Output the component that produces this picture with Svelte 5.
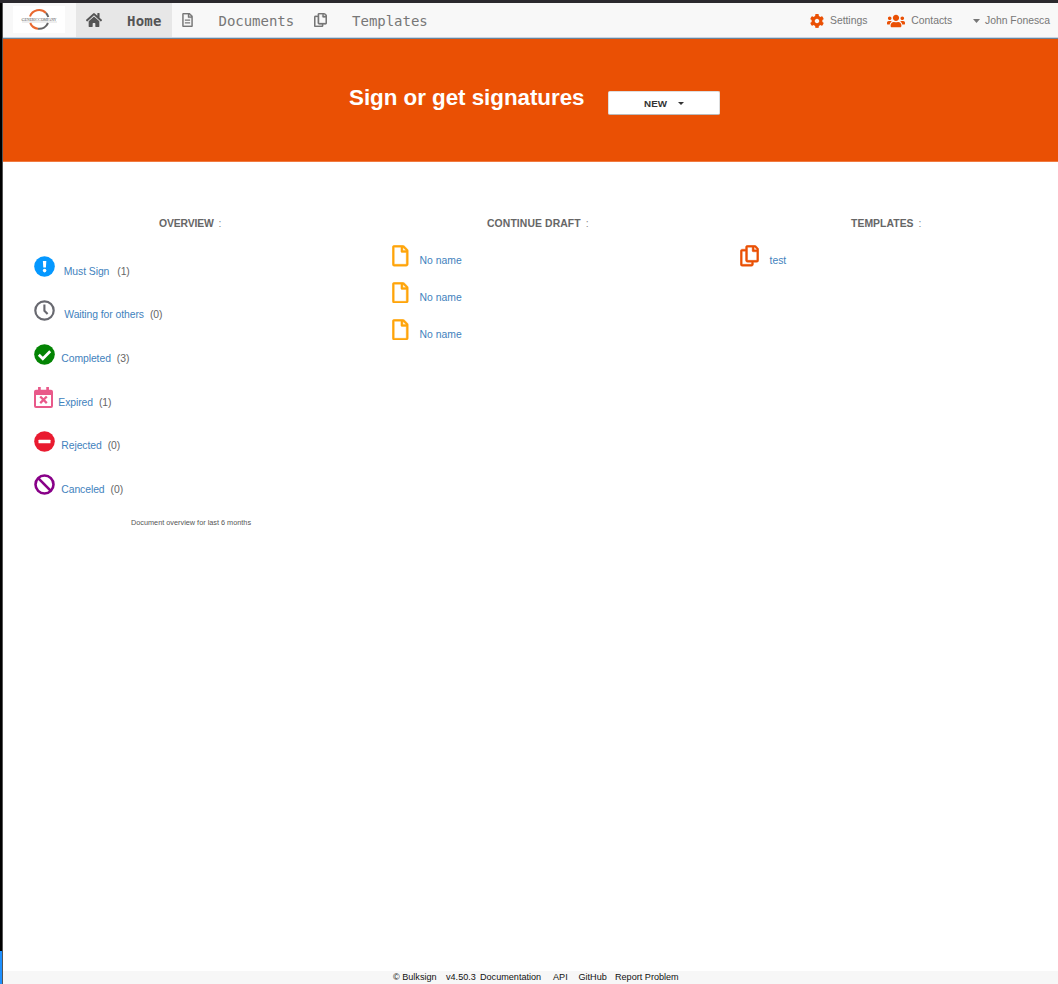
<script>
  const overview = [
    { name: 'Must Sign', count: 1, icon: 'must', gap: 8.5, after: 8 },
    { name: 'Waiting for others', count: 0, icon: 'wait', gap: 9, after: 6 },
    { name: 'Completed', count: 3, icon: 'done', gap: 6, after: 6 },
    { name: 'Expired', count: 1, icon: 'expired', gap: 5, after: 6 },
    { name: 'Rejected', count: 0, icon: 'rejected', gap: 6, after: 6 },
    { name: 'Canceled', count: 0, icon: 'canceled', gap: 6, after: 6 }
  ];
  const drafts = ['No name', 'No name', 'No name'];
  const copyPath = 'M433.941 65.941l-51.882-51.882A48 48 0 0 0 348.118 0H176c-26.51 0-48 21.49-48 48v48H48c-26.51 0-48 21.49-48 48v320c0 26.51 21.49 48 48 48h224c26.51 0 48-21.49 48-48v-48h80c26.51 0 48-21.49 48-48V99.882a48 48 0 0 0-14.059-33.941zM266 464H54a6 6 0 0 1-6-6V150a6 6 0 0 1 6-6h74v224c0 26.51 21.49 48 48 48h96v42a6 6 0 0 1-6 6zm128-96H182a6 6 0 0 1-6-6V54a6 6 0 0 1 6-6h106v88c0 13.255 10.745 24 24 24h88v202a6 6 0 0 1-6 6zm6-256h-64V48h9.632c1.591 0 3.117.632 4.243 1.757l48.368 48.368a6 6 0 0 1 1.757 4.243V112z';
  const filePath = 'M369.9 97.9L286 14C277 5 264.8 0 252.1 0H48C21.5 0 0 21.5 0 48v416c0 26.5 21.5 48 48 48h288c26.5 0 48-21.5 48-48V131.9c0-12.7-5.1-25-14.1-34zM332.1 128H256V51.9l76.1 76.1zM48 464V48h160v104c0 13.3 10.7 24 24 24h104v288H48z';
</script>

<div class="frame">
  <div class="edge"><i></i></div>
  <div class="page">
    <nav>
      <a class="logo" href="#home" aria-label="Generic Company">
        <svg width="52" height="27" viewBox="0 0 52 27">
          <rect width="52" height="27" fill="#fff" />
          <g fill="none" stroke-width="2">
            <path d="M17 10.5A9.6 9.6 0 0 1 33 7" stroke="#e9682f" />
            <path d="M33 7A9.6 9.6 0 0 1 35.3 11" stroke="#666" />
            <path d="M17.2 17A9.6 9.6 0 0 0 25 22.7" stroke="#e9682f" />
            <path d="M25 22.7A9.6 9.6 0 0 0 35 17" stroke="#666" />
          </g>
          <text x="8.5" y="14.8" textLength="35" lengthAdjust="spacingAndGlyphs" font-family="Liberation Serif, serif" font-size="4.2" fill="#444"><tspan>G</tspan><tspan font-size="3.400">ENERIC </tspan><tspan>C</tspan><tspan font-size="3.400">OMPANY</tspan></text>
          <path d="M9 16h35" stroke="#bbb" stroke-width=".5" />
        </svg>
      </a>
      <a class="tab active" href="#home">
        <svg width="16" height="14" viewBox="0 30 576 452" preserveAspectRatio="none"><path fill="#555" d="M280.37 148.26L96 300.11V464a16 16 0 0 0 16 16l112.06-.29a16 16 0 0 0 15.92-16V368a16 16 0 0 1 16-16h64a16 16 0 0 1 16 16v95.64a16 16 0 0 0 16 16.05L464 480a16 16 0 0 0 16-16V300L295.67 148.26a12.19 12.19 0 0 0-15.3 0zM571.6 251.47L488 182.56V44.05a12 12 0 0 0-12-12h-56a12 12 0 0 0-12 12v72.61L318.47 43a48 48 0 0 0-61 0L4.34 251.47a12 12 0 0 0-1.6 16.9l25.5 31A12 12 0 0 0 45.15 301l235.22-193.74a12.19 12.19 0 0 1 15.3 0L530.9 301a12 12 0 0 0 16.9-1.6l25.5-31a12 12 0 0 0-1.7-16.93z" /></svg>
        <span>Home</span>
      </a>
      <a class="tab docs" href="#documents">
        <svg width="11" height="14" viewBox="0 0 384 512"><path fill="#777" stroke="#777" stroke-width="10" d={filePath} /><path d="M96 264h192M96 360h192" stroke="#777" stroke-width="46" /></svg>
        <span>Documents</span>
      </a>
      <a class="tab temps" href="#templates">
        <svg width="13" height="14" viewBox="0 0 448 512" preserveAspectRatio="none"><path fill="#777" stroke="#777" stroke-width="10" d={copyPath} /></svg>
        <span>Templates</span>
      </a>
      <div class="tools">
        <a href="#settings">
          <svg width="14" height="14" viewBox="8 8 496 496"><path fill="#ea5004" d="M487.4 315.7l-42.6-24.6c4.3-23.2 4.3-47 0-70.2l42.6-24.6c4.9-2.8 7.1-8.6 5.5-14-11.1-35.6-30-67.8-54.7-94.6-3.8-4.1-10-5.1-14.8-2.3L380.8 110c-17.9-15.4-38.5-27.3-60.8-35.1V25.8c0-5.6-3.9-10.5-9.4-11.7-36.7-8.2-74.3-7.8-109.2 0-5.5 1.2-9.4 6.1-9.4 11.7V75c-22.2 7.9-42.8 19.8-60.8 35.1L88.7 85.5c-4.9-2.8-11-1.9-14.8 2.3-24.7 26.7-43.6 58.9-54.7 94.6-1.7 5.4.6 11.2 5.5 14L67.3 221c-4.3 23.2-4.3 47 0 70.2l-42.6 24.6c-4.9 2.8-7.1 8.6-5.5 14 11.1 35.6 30 67.8 54.7 94.6 3.8 4.1 10 5.1 14.8 2.3l42.6-24.6c17.9 15.4 38.5 27.3 60.8 35.1v49.2c0 5.6 3.9 10.5 9.4 11.7 36.7 8.2 74.3 7.8 109.2 0 5.5-1.2 9.4-6.1 9.4-11.7v-49.2c22.2-7.9 42.8-19.8 60.8-35.1l42.6 24.6c4.9 2.8 11 1.9 14.8-2.3 24.7-26.7 43.6-58.9 54.7-94.6 1.5-5.5-.7-11.3-5.6-14.1zM256 336c-44.1 0-80-35.9-80-80s35.9-80 80-80 80 35.9 80 80-35.9 80-80 80z" /></svg>
          <span>Settings</span>
        </a>
        <a class="contacts" href="#contacts">
          <svg width="18" height="14" viewBox="0 7 640 498"><path fill="#ea5004" d="M96 224c35.3 0 64-28.7 64-64s-28.7-64-64-64-64 28.7-64 64 28.7 64 64 64zm448 0c35.3 0 64-28.7 64-64s-28.7-64-64-64-64 28.7-64 64 28.7 64 64 64zm32 32h-64c-17.6 0-33.5 7.1-45.1 18.6 40.3 22.1 68.9 62 75.1 109.4h66c17.7 0 32-14.3 32-32v-32c0-35.3-28.7-64-64-64zm-256 0c61.9 0 112-50.1 112-112S381.9 32 320 32 208 82.1 208 144s50.1 112 112 112zm76.8 32h-8.3c-20.8 10-43.9 16-68.5 16s-47.6-6-68.5-16h-8.3C179.6 288 128 339.6 128 403.2V432c0 26.5 21.5 48 48 48h288c26.5 0 48-21.5 48-48v-28.8c0-63.6-51.6-115.2-115.2-115.2zm-223.7-13.4C161.5 263.1 145.6 256 128 256H64c-35.3 0-64 28.7-64 64v32c0 17.7 14.3 32 32 32h65.9c6.3-47.4 34.9-87.3 75.2-109.4z" /></svg>
          <span>Contacts</span>
        </a>
        <a class="user" href="#account">
          <svg width="7" height="4" viewBox="0 0 7 4"><path d="M0 0h7L3.5 4z" fill="#777" /></svg>
          <span>John Fonesca</span>
        </a>
      </div>
    </nav>

    <header>
      <h1>Sign or get signatures</h1>
      <button><span>NEW</span><svg width="6" height="3" viewBox="0 0 6 3"><path d="M0 0h6L3 3z" fill="#333" /></svg></button>
    </header>

    <main>
      <section class="overview">
        <h2>OVERVIEW <span>:</span></h2>
        <div class="statuses">
          {#each overview as item}
            <div class="status">
              <svg width={item.icon === 'expired' ? 19 : 21} height="21" viewBox={item.icon === 'expired' ? '0 0 19 21' : '0 0 21 21'}>
                {#if item.icon === 'must'}
                  <circle cx="10.5" cy="10.5" r="10.3" fill="#0598ff" />
                  <path d="M8.9 5h3.400l-.4 6.5H9.3z" fill="#fff" /><circle cx="10.6" cy="14.6" r="1.8" fill="#fff" />
                {:else if item.icon === 'wait'}
                  <circle cx="10.5" cy="10.5" r="9.2" fill="none" stroke="#686970" stroke-width="2.2" />
                  <path d="M10.4 4.5v6.2l3.2 3.200" fill="none" stroke="#686970" stroke-width="2.1" />
                {:else if item.icon === 'done'}
                  <circle cx="10.5" cy="10.5" r="10.3" fill="#038403" />
                  <path d="M4.8 10.8l4 4 7.4-7.5" fill="none" stroke="#fff" stroke-width="2.7" />
                {:else if item.icon === 'expired'}
                  <path d="M2 2.7h15a2 2 0 0 1 2 2V19a2 2 0 0 1-2 2H2a2 2 0 0 1-2-2V4.7a2 2 0 0 1 2-2zM2 8v11h15V8z" fill="#e9598a" fill-rule="evenodd" />
                  <path d="M5.4 0v4M13.6 0v4" stroke="#e9598a" stroke-width="2.7" />
                  <path d="M6.2 9.5l6.6 6.6M12.800 9.500l-6.600 6.600" stroke="#e9598a" stroke-width="2.300" />
                {:else if item.icon === 'rejected'}
                  <circle cx="10.5" cy="10.5" r="10.3" fill="#e91b30" />
                  <rect x="4.5" y="8.800" width="12" height="3.400" rx=".5" fill="#fff" />
                {:else}
                  <circle cx="10.5" cy="10.5" r="9" fill="none" stroke="#880088" stroke-width="2.600" />
                  <path d="M4.2 4.2l12.6 12.6" stroke="#880088" stroke-width="2.600" />
                {/if}
              </svg>
              <a href="#documents" style:margin-left="{item.gap}px" style:margin-right="{item.after}px">{item.name}</a>
              <span>({item.count})</span>
            </div>
          {/each}
        </div>
        <p>Document overview for last 6 months</p>
      </section>
      <section class="drafts">
        <h2>CONTINUE DRAFT <span>:</span></h2>
        <div class="files">
          {#each drafts as draft}
            <div class="file"><svg width="16.500" height="21.500" viewBox="-6 -6 396 524" preserveAspectRatio="none"><path d={filePath} fill="#ffa50a" stroke="#ffa50a" stroke-width="10" /></svg><a href="#draft">{draft}</a></div>
          {/each}
        </div>
      </section>
      <section class="templates">
        <h2>TEMPLATES <span>:</span></h2>
        <div class="files">
          <div class="file"><svg width="19" height="21.500" viewBox="-6 -6 460 524" preserveAspectRatio="none"><path d={copyPath} fill="#ea5004" stroke="#ea5004" stroke-width="10" /></svg><a href="#test">test</a></div>
        </div>
      </section>
    </main>

    <footer>
      <span class="brand">© Bulksign</span><span class="version">v4.50.3</span><a class="documentation" href="#docs">Documentation</a><a class="api" href="#api">API</a><a class="github" href="#github">GitHub</a><a href="#report">Report Problem</a>
    </footer>
  </div>
</div>

<style>
  :global(body) { background: #fff; }
  * { box-sizing: border-box; }
  a { color: inherit; text-decoration: none; }
  svg { display: block; flex: none; }
  .frame { display: flex; width: 1058px; height: 984px; border-top: 3px solid #2b292e; font: 10.4px/14px "Liberation Sans", Arial, sans-serif; color: #666; overflow: hidden; }
  .edge { width: 3px; background: #000; border-right: 1px solid #555; display: flex; align-items: flex-end; flex: none; }
  .edge i { width: 2px; height: 33px; background: #1e90ff; }
  .page { display: flex; flex-direction: column; width: 1055px; }
  nav { display: flex; height: 36px; background: #f8f8f8; border-bottom: 1px solid #6e8295; box-shadow: inset 0 -1px #c4d5e4; flex: none; }
  .logo { padding: 3px 0 0 10px; width: 73px; }
  .tab { display: flex; align-items: center; color: #777; font: 14px/18px "DejaVu Sans Mono", monospace; }
  .tab svg { margin-bottom: 1px; }
  .tab span { letter-spacing: -.03px; margin-top: 1px; }
  .active { width: 96px; height: 34px; background: #e7e7e7; color: #555; padding-left: 10px; font-weight: bold; }
  .active span { margin-left: 25px; letter-spacing: .2px; }
  .docs, .temps { height: 34px; }
  .docs { padding-left: 10px; }
  .docs span { margin-left: 25.500px; }
  .temps { padding-left: 20px; }
  .temps span { margin-left: 25px; }
  .tools { display: flex; align-items: center; margin-left: auto; height: 36px; padding-right: 8px; color: #777; }
  .tools a { display: flex; align-items: center; height: 35px; padding-bottom: 1px; }
  .tools span { margin-top: 1px; letter-spacing: -.03px; }
  .tools svg { margin-right: 6px; }
  .tools .contacts { margin-left: 20px; }
  .tools .user { margin-left: 21px; }
  .tools .user svg { margin-right: 5px; }
  header { height: 123px; background: #ea5004; padding: 45px 0 0 346px; display: flex; align-items: flex-start; flex: none; border-bottom: 1px solid #f07a40; }
  h1 { margin: 0; width: 259px; color: #fff; font-size: 22.4px; line-height: 28px; font-weight: bold; letter-spacing: -.04px; white-space: nowrap; }
  button { margin-top: 7px; width: 112px; height: 24px; padding: 0; display: flex; justify-content: center; align-items: center; gap: 11px; background: #fff; border: 1px solid #ddd; border-bottom-color: #bbb; border-radius: 2px; font: bold 9.8px/14px "Liberation Sans", Arial, sans-serif; color: #333; }
  button span { margin-top: 1px; }
  main { display: grid; grid-template-columns: 371px 350px 334px; padding-top: 55px; flex: 1; }
  h2 { margin: 0; font-size: 10.4px; line-height: 14px; font-weight: bold; color: #666; white-space: pre; }
  h2 span { margin-left: 2px; font-weight: normal; color: #888; }
  .overview h2 { padding-left: 156px; letter-spacing: -.13px; }
  .drafts h2 { padding-left: 113px; letter-spacing: .1px; }
  .templates h2 { padding-left: 127px; letter-spacing: .05px; }
  .statuses { padding: 25.400px 0 0 31.300px; }
  .status { height: 43.6px; display: flex; align-items: flex-start; white-space: nowrap; letter-spacing: -.08px; }
  .status a, .status span { margin-top: 8.400px; }
  .status a, .file a { color: #3f82bd; }
  .overview p { margin: 0 0 0 128px; font-size: 7.300px; line-height: 10px; color: #555; }
  .files { padding-top: 14px; }
  .drafts .files { padding-left: 18px; }
  .templates .files { padding-left: 16px; }
  .file { display: flex; height: 36.8px; align-items: flex-start; }
  .file a { margin: 9px 0 0 11px; }
  .templates .file a { margin-left: 10.500px; }
  footer { height: 13px; background: #f7f7f7; padding-left: 390px; display: flex; font-size: 9.100px; line-height: 12px; color: #111; white-space: nowrap; flex: none; }
  .brand { width: 53px; }
  .version { width: 34px; }
  .documentation { width: 73px; }
  .api { width: 25.500px; }
  .github { width: 36.500px; }
</style>
